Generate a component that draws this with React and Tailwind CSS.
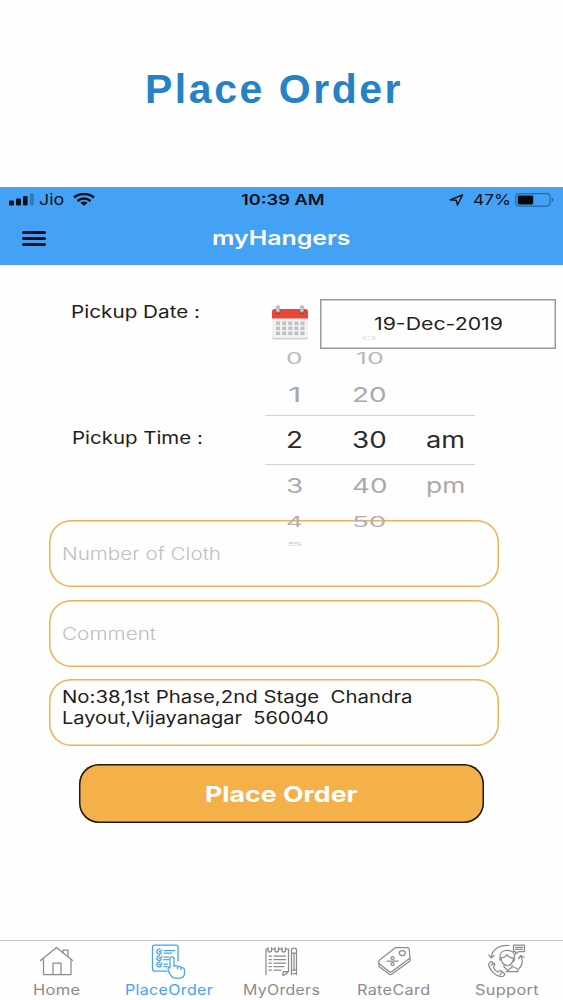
import React, { useLayoutEffect, useRef, useState } from 'react'
import clsx from 'clsx'

// Wide text: stretches its content horizontally to the given width
function WideText({ width, squash = 1, className, children }) {
  const ref = useRef(null)
  const [scale, setScale] = useState(1)

  useLayoutEffect(() => {
    if (ref.current) setScale(width / ref.current.offsetWidth)
  }, [width, children])

  return (
    <span className={clsx('block shrink-0 text-left', className)} style={{ width }}>
      <span ref={ref} className="inline-block origin-left whitespace-pre align-top" style={{ transform: `scale(${scale}, ${squash})` }}>
        {children}
      </span>
    </span>
  )
}

function SignalIcon() {
  return (
    <svg width="26" height="13" viewBox="0 0 26 13" className="shrink-0">
      <rect x="0" y="7.5" width="5" height="5" rx="1.2" fill="#0b1119" />
      <rect x="7" y="5.5" width="5" height="7" rx="1.2" fill="#0b1119" />
      <rect x="14" y="3" width="4.6" height="9.5" rx="1.2" fill="#0b1119" />
      <rect x="20.8" y="0.5" width="4" height="12" rx="1.2" fill="#2f79bd" />
    </svg>
  )
}

function WifiIcon() {
  return (
    <svg width="22" height="13" viewBox="0 0 22 13" fill="none" stroke="#0b1119" strokeWidth="2.5" className="shrink-0">
      <path d="M1 4.5C6.5-.2 15.5-.2 21 4.5" />
      <path d="M4.5 8C8.3 4.6 13.7 4.6 17.5 8" />
      <path d="M11 12.8L7.3 9.8C9.4 8.2 12.6 8.2 14.7 9.8Z" fill="#0b1119" stroke="none" />
    </svg>
  )
}

function BatteryIcon() {
  return (
    <svg width="39" height="14" viewBox="0 0 39 14" className="shrink-0">
      <rect x="0.6" y="0.6" width="34.5" height="12.5" rx="3.3" fill="none" stroke="#2c669d" strokeWidth="1.1" />
      <rect x="2.7" y="2.4" width="15.5" height="9" rx="1.3" fill="#05080c" />
      <path d="M36.8 4.6C38.9 5.4 38.9 8.3 36.8 9.1Z" fill="#2c669d" />
    </svg>
  )
}

function CalendarIcon() {
  return (
    <svg width="38" height="36" viewBox="0 0 38 36" className="shrink-0">
      <path d="M1 12H37V32Q37 34.5 34.5 34.5H3.5Q1 34.5 1 32Z" fill="#cfcfd0" />
      <path d="M1 12H37V30.5Q37 33 34.5 33H3.5Q1 33 1 30.5Z" fill="#f1f2f3" />
      <path d="M1 13.5V6.5Q1 4 3.5 4H34.5Q37 4 37 6.5V13.5Z" fill="#e5483b" />
      {[5, 11.2, 17.3, 23.4, 29.5].map((x) => [16.5, 21.5, 26.5].map((y) => (
        <rect key={`${x}-${y}`} x={x} y={y} width="4" height="3.6" fill="#bfc2c5" />
      )))}
      {[6.5, 30.5].map((x) => (
        <g key={x}>
          <circle cx={x + 0.5} cy="6.5" r="2.6" fill="#b83228" />
          <rect x={x - 1.4} y="0.5" width="3.6" height="7" rx="1.8" fill="#c3c7ca" stroke="#9b9fa3" strokeWidth="0.5" />
        </g>
      ))}
    </svg>
  )
}

function HomeIcon() {
  return (
    <>
      <path d="M1.5 14.5L17.5 1.500L33.5 14.5" />
      <path d="M4.500 13V28.500H32V13" />
      <path d="M14 28.500V17H22V28.500" />
      <path d="M24 6.500V4H29V10.500" />
    </>
  )
}

function PlaceOrderIcon() {
  return (
    <>
      <path d="M16 27H3.500Q1.5 27 1.5 25V3Q1.5 1 3.5 1H25Q27 1 27 3V17" />
      {[7.5, 14, 20.5].map((y) => (
        <path key={y} d={`M8.8 ${y - 2.3}A2.4 2.4 0 1 0 10.4 ${y + 1.2}M8 ${y - 0.4}L9 ${y + 0.5}L11 ${y - 1.6}`} />
      ))}
      <path d="M13 6.5H23.500M13 9H20.5M13 13H17.5M13 15.500H17.5M13 20H16.500M13 22.500H16" />
      <path d="M19 24V14.5C19 12.3 23 12.3 23 14.5V22.5M23 22.500C24 21 26.500 21.300 26.500 23C27.500 21.800 30 22.300 30 24C31.500 23.200 33.500 24 33.500 26V29C33.500 32 31.5 34 28.500 34H24C20.500 34 19 31 17.500 27C16.500 24 17.500 22.500 19 23M26.500 23V24.800M30 24V25.500" />
    </>
  )
}

function MyOrdersIcon() {
  return (
    <>
      <path d="M2 28.500V3H4M7.5 3H11M14.5 3H18M21.5 3H24.5V25.5" />
      <path d="M4 1.5V5Q5.7 7 7.5 5V1.5M11 1.5V5Q12.7 7 14.500 5V1.5M18 1.5V5Q19.7 7 21.5 5V1.5" />
      <path d="M5 10H7.5M10 10H21.5M5 13.5H7.5M10 13.5H21.5M5 17H7.5M10 17H21.5M5 20.5H7.5M10 20.5H20M5 24H7.5M10 24H17" />
      <path d="M18.500 29L19.500 25.5H24.5L20.5 29Z" />
      <path d="M27.5 28.500V4Q27.5 2 29.9 2Q32.5 2 32.5 4V28.500M27.5 7H32.5M30 7V24M27.5 24H32.5M29 27.5H31.5" />
    </>
  )
}

function RateCardIcon() {
  return (
    <>
      <path d="M2 14.500L18.5 1.500H30.5Q32 1.500 32.2 3L33 12L15 25.500Q13.5 26.500 12 25.500L2 17.500Q1 16 2 14.500Z" />
      <path d="M2 17.500V20.500L12 28Q13.5 29.300 15 28L33 15V12" />
      <ellipse cx="25.300" cy="7" rx="3" ry="2.5" />
      <path d="M10 15H21" />
      <circle cx="15.5" cy="12" r="1.5" />
      <circle cx="15.5" cy="18" r="1.500" />
    </>
  )
}

function SupportIcon() {
  return (
    <>
      <path d="M26.5 1H37.5V7.5H32L28.5 10V7.5H26.5ZM28.5 3.3H35.5M28.5 5.3H35.5" />
      <path d="M22 1.5C12 1 5 5.5 4.2 13.5M1.8 11L4 14L7 11.5" />
      <path d="M31.5 25C35 22.5 36.5 17 34 12.5M31.5 14.5L33.8 11.5L37 13.5" />
      <path d="M13 12C13 4.5 27.5 4.5 27.5 12V15C27.5 17.5 26 18 26 18M14 14C17 13.5 19.5 12 20 10.5C21.5 13 24 14 26.5 14C26.5 18 23.5 21.5 20.5 21.5C17 21.5 14 18 14 14ZM13 12V16" />
      <path d="M17 21V23L21 26.5L25 23V21M25 22.5C29 23.5 31 25 31 27.500H19" />
      <path d="M2 19.5C.5 22 6.5 31.5 13.5 32.5C16 33 18 31.5 17.5 29.5L13.5 26.5L11 28C9 27.5 6.5 24.5 6.5 23L7.8 21L4.5 17.5Q3 17.5 2 19.5ZM4 21L7.5 19.5M13 31L14.5 28.5" />
    </>
  )
}

const tabs = [
  { label: 'Home', width: 47, icon: HomeIcon },
  { label: 'PlaceOrder', width: 88, icon: PlaceOrderIcon, active: true },
  { label: 'MyOrders', width: 77, icon: MyOrdersIcon },
  { label: 'RateCard', width: 74, icon: RateCardIcon },
  { label: 'Support', width: 64, icon: SupportIcon, iconWidth: 39 }
]

// Wheel rows get flatter and lighter away from the selected one
const wheel = [
  { minute: '0', height: 'h-[13px]', color: 'text-[#e2e2e4]', squash: 0.2 },
  { hour: '0', minute: '10', height: 'h-[30px]', color: 'text-[#b9b9bc]', squash: 0.66 },
  { hour: '1', minute: '20', height: 'h-[41px]', color: 'text-[#a9a9ac]', squash: 0.87 },
  { hour: '2', minute: '30', half: 'am', height: 'h-[50px] border-y border-[#d3d3d6]', color: 'text-[#2a2a2c]', squash: 1 },
  { hour: '3', minute: '40', half: 'pm', height: 'h-[41px]', color: 'text-[#a9a9ac]', squash: 0.87 },
  { hour: '4', minute: '50', height: 'h-[32px]', color: 'text-[#b0b0b3]', squash: 0.64 },
  { hour: '5', height: 'h-[11px]', color: 'text-[#d2d2d5]', squash: 0.22 }
]

function StatusBar() {
  return (
    <div className="grid h-[25px] grid-cols-3 items-center text-[15px] leading-[25px] text-[#0b1119]">
      <div className="flex items-center pl-[9px]">
        <SignalIcon />
        <WideText width={25} className="ml-[4px]">Jio</WideText>
        <div className="ml-[9px]"><WifiIcon /></div>
      </div>
      <div className="flex justify-center pl-1">
        <WideText width={84} className="font-semibold">10:39 AM</WideText>
      </div>
      <div className="flex items-center justify-end pr-[9px]">
        <svg width="15" height="12" viewBox="0 0 15 12" fill="none" stroke="#0b1119" strokeWidth="1.4" strokeLinejoin="round">
          <path d="M1 5.8L13.5 1L8.5 11L7.3 6.3Z" />
        </svg>
        <WideText width={38} className="ml-[9px]">47%</WideText>
        <div className="ml-[4px]"><BatteryIcon /></div>
      </div>
    </div>
  )
}

function TimeWheel() {
  return (
    <div className="absolute left-[265px] top-[66px] flex w-[210px] flex-col text-[23px] leading-[28px]">
      {wheel.map((row, i) => (
        <div key={i} className={`grid grid-cols-[59px_91px_60px] grid-rows-1 items-center justify-items-center ${row.height} ${row.color}`}>
          <div className="flex h-full items-center">{row.hour && <WideText width={row.hour === '1' ? 13 : 17} squash={row.squash}>{row.hour}</WideText>}</div>
          <div className="flex h-full items-center">{row.minute && <WideText width={row.minute === '0' ? 17 : row.minute === '10' ? 28 : 35} squash={row.squash}>{row.minute}</WideText>}</div>
          <div className="flex h-full items-center">{row.half && <WideText width={39} squash={row.squash === 1 ? 1 : 0.9}>{row.half}</WideText>}</div>
        </div>
      ))}
    </div>
  )
}

export default function App() {
  return (
    <div className="flex h-[1000px] w-[563px] flex-col overflow-hidden bg-[#fefefe] font-['Inter','Liberation_Sans',sans-serif] text-[#1f1f21]">
      <div className="flex h-[187px] justify-center pt-[64px] pr-[16px] font-['Liberation_Sans',Arial,sans-serif] text-[40px] leading-[50px] text-[#2583c5]">
        <h1 className="font-bold"><WideText width={258} className="tracking-[2.5px]">Place Order</WideText></h1>
      </div>

      <header className="h-[78px] bg-[#43a2f6]">
        <StatusBar />
        <div className="grid h-[52px] grid-cols-3 items-center">
          <div className="flex flex-col gap-[3px] pl-[22px]">
            {[0, 1, 2].map((i) => <span key={i} className="h-[3px] w-[24px] rounded-full bg-[#0b1119]" />)}
          </div>
          <WideText width={138} className="justify-self-center text-[20px] font-semibold leading-[26px] text-white">myHangers</WideText>
        </div>
      </header>

      <main className="relative flex-1">
        <div className="flex h-[118px] items-start pl-[71px] pt-[34px] text-[17px]">
          <WideText width={129} className="pt-[3px] leading-[20px]">Pickup Date :</WideText>
          <div className="ml-[71px] pt-[6px]"><CalendarIcon /></div>
          <div className="ml-[11px] flex h-[50px] w-[236px] items-center justify-center bg-[#fefefe] shadow-[inset_0_0_0_1.5px_#9a9a9c]">
            <WideText width={129} className="leading-[20px]">19-Dec-2019</WideText>
          </div>
        </div>
        <div className="flex h-[137px] items-start pl-[72px] pt-[45px] text-[17px] leading-[20px]">
          <WideText width={131}>Pickup Time :</WideText>
        </div>

        <div className="ml-[49px] flex w-[450px] flex-col gap-[12.5px] text-[17px] leading-[20.5px]">
          <div className="flex h-[67px] items-center rounded-[22px] pl-[13px] pt-[2px] font-light text-[#bfbfc4] shadow-[inset_0_0_0_1.5px_#f1b250]">
            <WideText width={159}>Number of Cloth</WideText>
          </div>
          <div className="flex h-[67px] items-center rounded-[22px] pl-[13px] pt-[2px] font-light text-[#bfbfc4] shadow-[inset_0_0_0_1.5px_#f1b250]">
            <WideText width={94}>Comment</WideText>
          </div>
          <div className="h-[67px] rounded-[22px] pl-[13px] pt-[8px] shadow-[inset_0_0_0_1.5px_#f1b250]">
            <WideText width={350}>{'No:38,1st Phase,2nd Stage  Chandra'}</WideText>
            <WideText width={267}>{'Layout,Vijayanagar  560040'}</WideText>
          </div>
        </div>

        <button className="ml-[79px] mt-[18px] flex h-[59px] w-[405px] items-center justify-center rounded-[20px] bg-[#f4b14a] text-[22px] font-bold leading-[28px] text-white shadow-[inset_0_0_0_1.5px_#1d1a14]">
          <WideText width={153}>Place Order</WideText>
        </button>

        <TimeWheel />
      </main>

      <nav className="grid h-[60px] grid-cols-5 border-t border-[#c4c4c6]">
        {tabs.map(({ label, width, icon: Icon, iconWidth = 35, active }) => (
          <div key={label} className={`flex flex-col items-center pt-[3px] ${active ? 'text-[#43a2f6]' : 'text-[#8b8b8f]'}`}>
            <svg width={iconWidth} height="35" viewBox={`0 0 ${iconWidth} 35`} fill="none" stroke="currentColor" strokeWidth="1.25" strokeLinecap="round" strokeLinejoin="round">
              <g transform={active || label === 'Support' ? undefined : 'translate(0 2)'}><Icon /></g>
            </svg>
            <WideText width={width} className="text-[14px] leading-[21px] tracking-[0.3px]">{label}</WideText>
          </div>
        ))}
      </nav>
    </div>
  )
}
